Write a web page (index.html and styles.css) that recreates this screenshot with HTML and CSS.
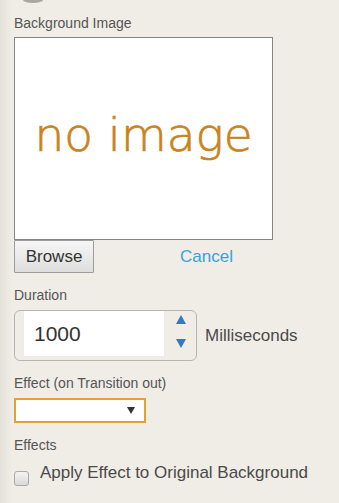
FILE: index.html
```html
<!DOCTYPE html>
<html lang="en">

<head>
    <meta charset="UTF-8">
    <meta name="viewport" content="width=device-width, initial-scale=1.0">
    <title>Background settings</title>

    <link rel="stylesheet" href="styles.css">
</head>

<body>
    <div class="panel">
        <div class="knob"></div>

        <div class="label first">Background Image</div>
        <div class="preview">
            <span class="no-image">no image</span>
        </div>
        <div class="file-row">
            <button class="btn">Browse</button>
            <a class="cancel" href="#">Cancel</a>
        </div>

        <div class="label">Duration</div>
        <div class="duration-row">
            <div class="spinner">
                <div class="spinner-value">1000</div>
                <div class="spinner-arrows">
                    <span class="arrow up"></span>
                    <span class="arrow down"></span>
                </div>
            </div>
            <span class="unit">Milliseconds</span>
        </div>

        <div class="label">Effect (on Transition out)</div>
        <div class="select">
            <span class="caret"></span>
        </div>

        <div class="label">Effects</div>
        <label class="check-row">
            <span class="checkbox"></span>
            <span class="check-text">Apply Effect to Original Background</span>
        </label>
    </div>
</body>

</html>
```

FILE: styles.css
```css
* {
    margin: 0;
    padding: 0;
    box-sizing: border-box;
}

html,
body {
    height: 100%;
}

body {
    background: linear-gradient(to right, #e5e1d9 0, #f0ede7 12px);
    font-family: "Liberation Sans", Arial, sans-serif;
    color: #555;
}

.panel {
    padding-left: 14px;
}

.knob {
    width: 20px;
    height: 3px;
    margin-left: 9px;
    border-radius: 0 0 10px 10px / 0 0 3px 3px;
    background: #a9a7a3;
}

.label {
    font-size: 14px;
    line-height: 16px;
    margin-top: 14px;
    margin-bottom: 7px;
}

.label.first {
    margin-top: 12px;
    margin-bottom: 6px;
}

.preview {
    width: 259px;
    height: 203px;
    border: 1px solid #858585;
    background: #fff;

    display: flex;
    justify-content: center;
    align-items: center;
}

.no-image {
    font-family: "DejaVu Sans", sans-serif;
    font-weight: 200;
    font-size: 47px;
    line-height: 50px;
    color: #c9831a;
    -webkit-text-stroke: 0.7px #c9831a;
    margin-top: -8px;
}

.file-row {
    display: flex;
    align-items: center;
}

.btn {
    width: 80px;
    height: 33px;
    border: 1px solid #9c9c9c;
    border-radius: 1px;
    background: linear-gradient(#f6f6f6, #dedede);
    font-family: "Liberation Sans", Arial, sans-serif;
    font-size: 17px;
    color: #333;
}

.cancel {
    margin-left: 86px;
    font-size: 17px;
    color: #3aa2dc;
    text-decoration: none;
}

.duration-row {
    display: flex;
    align-items: center;
}

.spinner {
    width: 183px;
    height: 51px;
    border: 1px solid #b7b5b1;
    border-radius: 6px;
    padding: 0 0 3px 8px;

    display: flex;
}

.spinner-value {
    width: 142px;
    background: #fff;
    border: 1px solid #ebebeb;
    border-top: 0;
    font-size: 21px;
    color: #333;
    padding-left: 10px;

    display: flex;
    align-items: center;
}

.spinner-arrows {
    flex: 1;
    padding-top: 4px;

    display: flex;
    flex-direction: column;
    align-items: center;
    gap: 15px;
}

.arrow {
    width: 0;
    height: 0;
    border-left: 5px solid transparent;
    border-right: 5px solid transparent;
}

.arrow.up {
    border-bottom: 9px solid #2d7bc9;
}

.arrow.down {
    border-top: 9px solid #2d7bc9;
}

.unit {
    margin-left: 8px;
    font-size: 17px;
    color: #4a4a4a;
}

.select {
    width: 132px;
    height: 25px;
    border: 2px solid #e3a131;
    background: #fff;
    padding-right: 9px;

    display: flex;
    justify-content: flex-end;
    align-items: center;
}

.caret {
    width: 0;
    height: 0;
    border-left: 4px solid transparent;
    border-right: 4px solid transparent;
    border-top: 7px solid #333;
}

.check-row {
    margin-top: 10px;
    display: flex;
    align-items: flex-start;
}

.checkbox {
    width: 15px;
    height: 15px;
    margin-top: 8px;
    border: 1px solid #a9a9a9;
    border-radius: 3px;
    background: linear-gradient(#f3f3f3, #d9d9d9);
}

.check-text {
    margin-left: 11px;
    font-size: 17px;
    line-height: 20px;
    color: #4a4a4a;
}
```
